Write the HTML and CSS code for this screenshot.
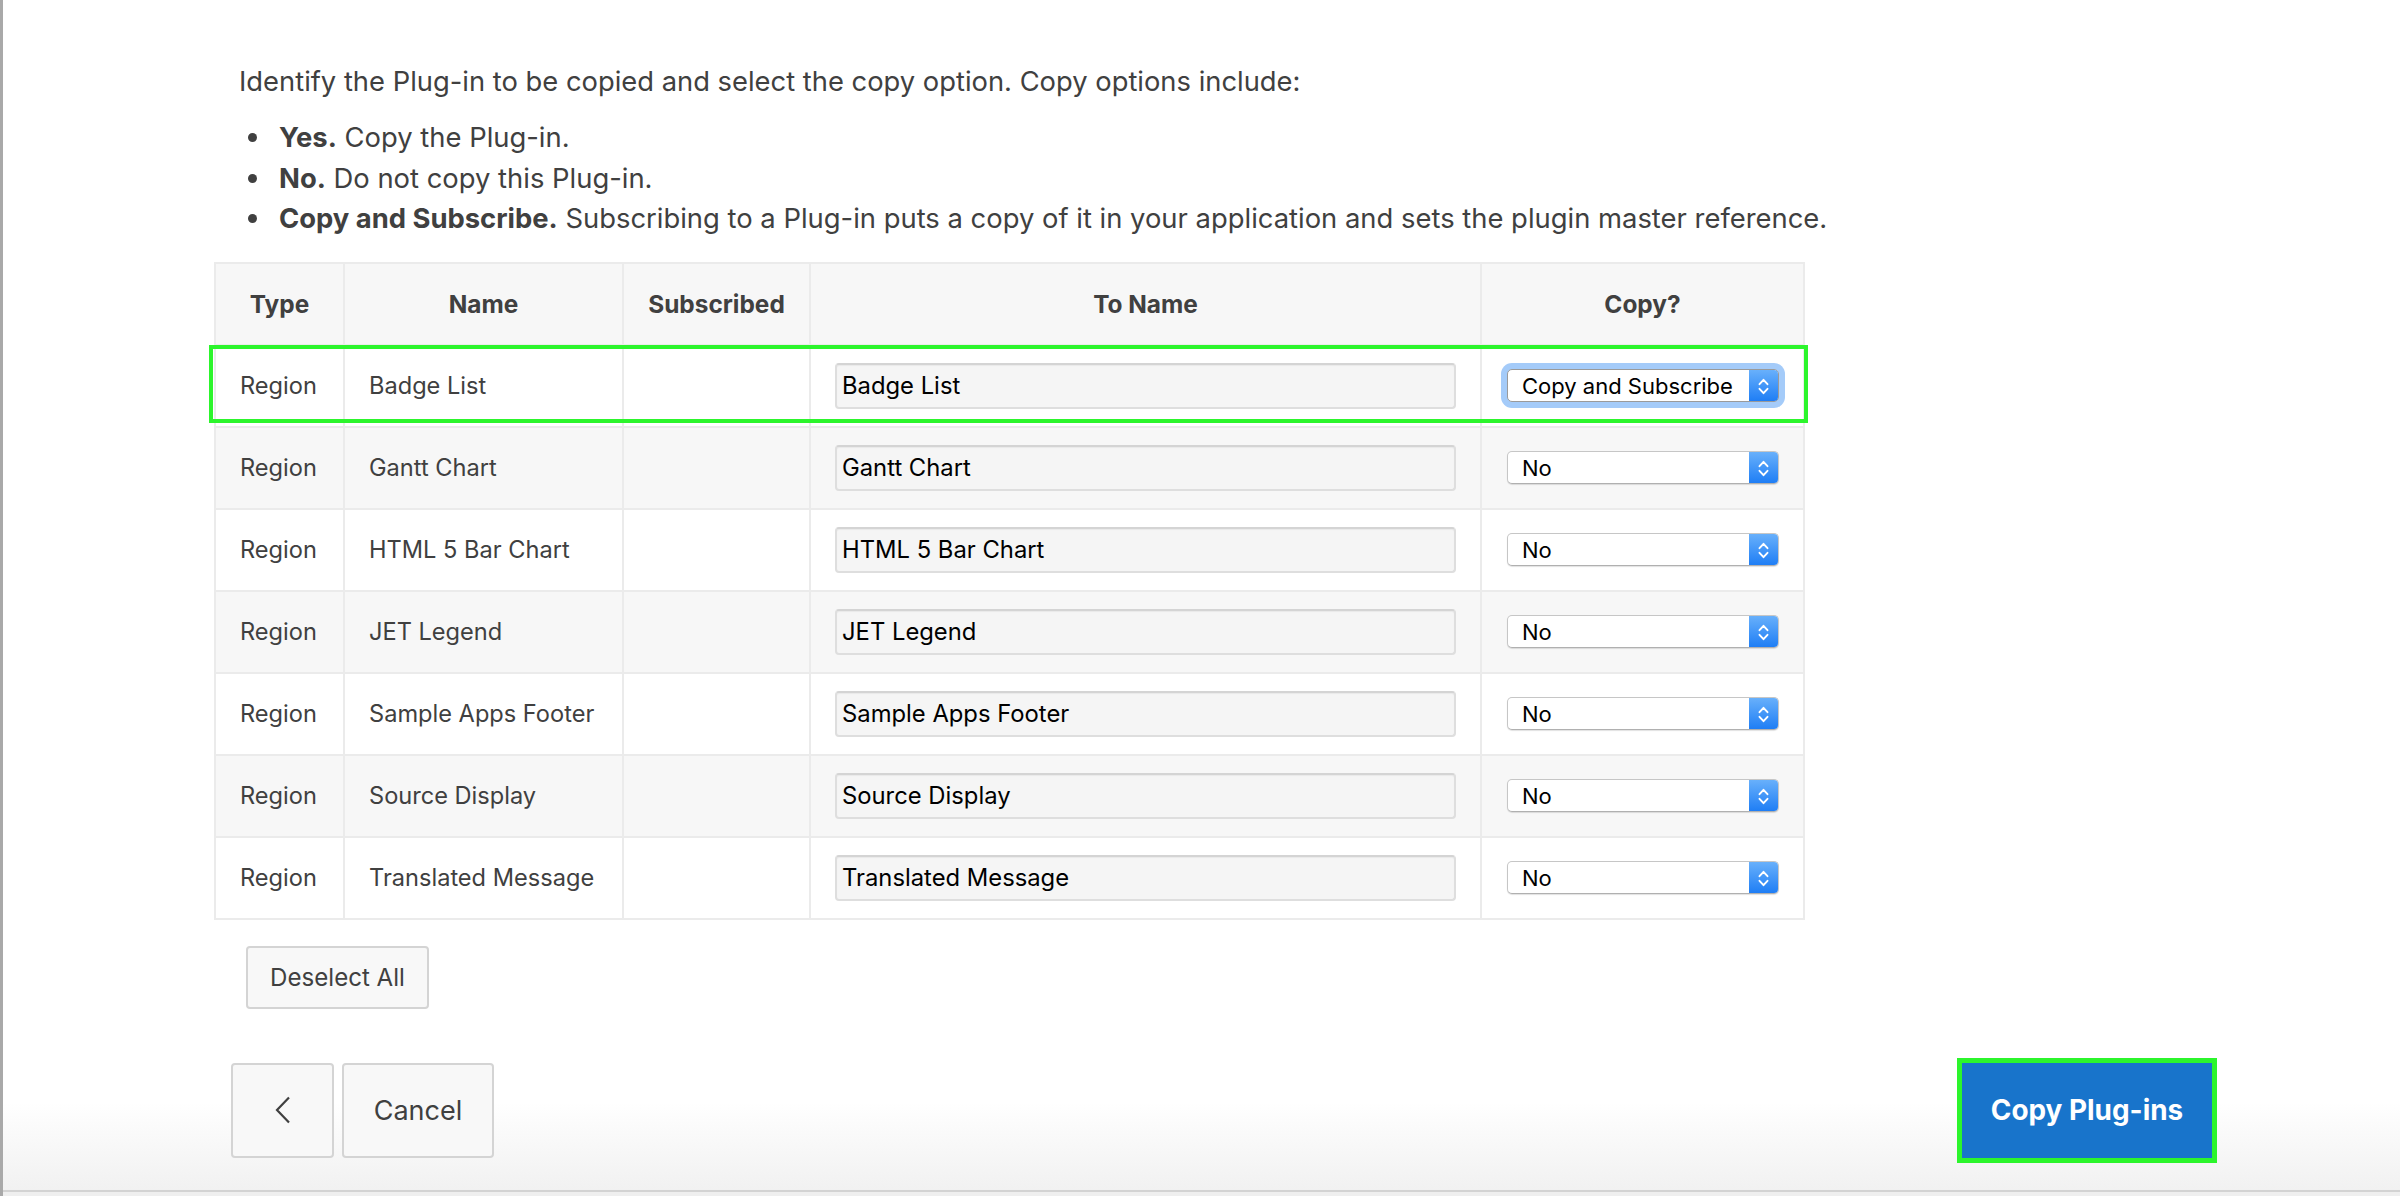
FILE: index.html
```html
<!DOCTYPE html>
<html lang="en">
<head>
<meta charset="utf-8">
<title>Copy Plug-ins</title>
<link rel="stylesheet" href="styles.css">
</head>
<body>
<div class="page">
  <main class="content">
    <p class="intro">Identify the Plug-in to be copied and select the copy option. Copy options include:</p>
    <ul class="options">
      <li><b>Yes.</b> Copy the Plug-in.</li>
      <li><b>No.</b> Do not copy this Plug-in.</li>
      <li><b>Copy and Subscribe.</b> Subscribing to a Plug-in puts a copy of it in your application and sets the plugin master reference.</li>
    </ul>
    <div class="table-wrap">
      <table class="grid">
        <colgroup>
          <col class="c-type"><col class="c-name"><col class="c-sub"><col class="c-to"><col class="c-copy">
        </colgroup>
        <thead>
          <tr><th>Type</th><th>Name</th><th>Subscribed</th><th>To Name</th><th>Copy?</th></tr>
        </thead>
        <tbody>
          <tr>
            <td>Region</td><td>Badge List</td><td></td>
            <td><input class="text" type="text" value="Badge List"></td>
            <td><div class="select focused"><span class="sel-val">Copy and Subscribe</span><span class="sel-arrow"><svg viewBox="0 0 29 33" width="29" height="33"><path d="M10.5 14.2 L14.5 9.8 L18.5 14.2 M10.5 18.8 L14.5 23.2 L18.5 18.8" fill="none" stroke="#fff" stroke-width="1.9" stroke-linecap="round" stroke-linejoin="round"/></svg></span></div></td>
          </tr>
          <tr>
            <td>Region</td><td>Gantt Chart</td><td></td>
            <td><input class="text" type="text" value="Gantt Chart"></td>
            <td><div class="select"><span class="sel-val">No</span><span class="sel-arrow"><svg viewBox="0 0 29 33" width="29" height="33"><path d="M10.5 14.2 L14.5 9.8 L18.5 14.2 M10.5 18.8 L14.5 23.2 L18.5 18.8" fill="none" stroke="#fff" stroke-width="1.9" stroke-linecap="round" stroke-linejoin="round"/></svg></span></div></td>
          </tr>
          <tr>
            <td>Region</td><td>HTML 5 Bar Chart</td><td></td>
            <td><input class="text" type="text" value="HTML 5 Bar Chart"></td>
            <td><div class="select"><span class="sel-val">No</span><span class="sel-arrow"><svg viewBox="0 0 29 33" width="29" height="33"><path d="M10.5 14.2 L14.5 9.8 L18.5 14.2 M10.5 18.8 L14.5 23.2 L18.5 18.8" fill="none" stroke="#fff" stroke-width="1.9" stroke-linecap="round" stroke-linejoin="round"/></svg></span></div></td>
          </tr>
          <tr>
            <td>Region</td><td>JET Legend</td><td></td>
            <td><input class="text" type="text" value="JET Legend"></td>
            <td><div class="select"><span class="sel-val">No</span><span class="sel-arrow"><svg viewBox="0 0 29 33" width="29" height="33"><path d="M10.5 14.2 L14.5 9.8 L18.5 14.2 M10.5 18.8 L14.5 23.2 L18.5 18.8" fill="none" stroke="#fff" stroke-width="1.9" stroke-linecap="round" stroke-linejoin="round"/></svg></span></div></td>
          </tr>
          <tr>
            <td>Region</td><td>Sample Apps Footer</td><td></td>
            <td><input class="text" type="text" value="Sample Apps Footer"></td>
            <td><div class="select"><span class="sel-val">No</span><span class="sel-arrow"><svg viewBox="0 0 29 33" width="29" height="33"><path d="M10.5 14.2 L14.5 9.8 L18.5 14.2 M10.5 18.8 L14.5 23.2 L18.5 18.8" fill="none" stroke="#fff" stroke-width="1.9" stroke-linecap="round" stroke-linejoin="round"/></svg></span></div></td>
          </tr>
          <tr>
            <td>Region</td><td>Source Display</td><td></td>
            <td><input class="text" type="text" value="Source Display"></td>
            <td><div class="select"><span class="sel-val">No</span><span class="sel-arrow"><svg viewBox="0 0 29 33" width="29" height="33"><path d="M10.5 14.2 L14.5 9.8 L18.5 14.2 M10.5 18.8 L14.5 23.2 L18.5 18.8" fill="none" stroke="#fff" stroke-width="1.9" stroke-linecap="round" stroke-linejoin="round"/></svg></span></div></td>
          </tr>
          <tr>
            <td>Region</td><td>Translated Message</td><td></td>
            <td><input class="text" type="text" value="Translated Message"></td>
            <td><div class="select"><span class="sel-val">No</span><span class="sel-arrow"><svg viewBox="0 0 29 33" width="29" height="33"><path d="M10.5 14.2 L14.5 9.8 L18.5 14.2 M10.5 18.8 L14.5 23.2 L18.5 18.8" fill="none" stroke="#fff" stroke-width="1.9" stroke-linecap="round" stroke-linejoin="round"/></svg></span></div></td>
          </tr>
        </tbody>
      </table>
      <div class="highlight"></div>
    </div>
    <button class="btn deselect" type="button">Deselect All</button>
  </main>
  <footer class="actions">
    <div class="actions-left">
      <button class="btn back" type="button" aria-label="Previous"><svg viewBox="0 0 16 28" width="16" height="28"><path d="M14 1.5 L2 14 L14 26.5" fill="none" stroke="#404040" stroke-width="2.2" stroke-linejoin="miter"/></svg></button>
      <button class="btn cancel" type="button">Cancel</button>
    </div>
    <button class="btn primary" type="button">Copy Plug-ins</button>
  </footer>
</div>
</body>
</html>
```

FILE: styles.css
```css
* { box-sizing: border-box; }

html, body {
  margin: 0;
  padding: 0;
}

body {
  width: 2400px;
  height: 1196px;
  overflow: hidden;
  background: #efefef;
  border-left: 3px solid #a9a9a9;
  font-family: Inter, "Liberation Sans", sans-serif;
  color: #404040;
}

.page {
  height: 1192px;
  display: flex;
  flex-direction: column;
  background: #ffffff;
  border-bottom: 2px solid #d3d3d3;
}

.content {
  flex: 1;
  padding: 62px 0 0 211px;
}

.intro {
  margin: 0 0 15px;
  padding-left: 25px;
  font-size: 27.35px;
  line-height: 40px;
}

.options {
  margin: 0;
  padding-left: 65px;
  list-style: none;
  font-size: 27.4px;
  line-height: 40.5px;
}

.options li::before {
  content: "";
  display: inline-block;
  width: 9px;
  height: 9px;
  margin: 0 22px 0 -31px;
  border-radius: 50%;
  background: #404040;
  vertical-align: middle;
  position: relative;
  top: -2px;
}

.options b { font-weight: 700; }

.table-wrap {
  position: relative;
  width: 1589px;
  margin-top: 23px;
}

.grid {
  width: 1589px;
  border-collapse: collapse;
  table-layout: fixed;
  border: 2px solid #ebebeb;
}

.c-type { width: 129px; }
.c-name { width: 279px; }
.c-sub  { width: 187px; }
.c-to   { width: 671px; }
.c-copy { width: 323px; }

.grid th,
.grid td {
  border: 2px solid #ebebeb;
  height: 82px;
  padding: 0 24px;
  font-size: 23.6px;
  vertical-align: middle;
  white-space: nowrap;
}

.grid th {
  background: #f7f7f7;
  font-size: 24.4px;
  font-weight: 700;
  text-align: center;
  color: #404040;
}

.grid td {
  text-align: left;
  background: #ffffff;
}

.grid tbody tr:nth-child(even) td {
  background: #f7f7f7;
}

.text {
  display: block;
  width: 100%;
  height: 46px;
  padding: 0 5px;
  border: 2px solid #dedede;
  border-top-color: #d4d4d4;
  border-radius: 4px;
  background: #f5f5f5;
  box-shadow: inset 0 1px 1px rgba(0, 0, 0, 0.05);
  font-family: Inter, "Liberation Sans", sans-serif;
  font-size: 23.8px;
  color: #000000;
  outline: none;
}

.select {
  display: flex;
  align-items: center;
  width: 272px;
  height: 33px;
  margin-left: 1px;
  border: 1px solid #c6c6c6;
  border-bottom-color: #b0b0b0;
  border-radius: 5px;
  background: #ffffff;
  box-shadow: 0 1px 1px rgba(0, 0, 0, 0.12);
  overflow: hidden;
  font-size: 22px;
  color: #000000;
}

.select.focused {
  border-color: #9a9a9a;
  box-shadow: 0 0 0 6px #a4cbf9;
}

.sel-val {
  flex: 1;
  padding-left: 14px;
  white-space: nowrap;
}

.sel-arrow {
  display: flex;
  width: 29px;
  height: 100%;
  background: linear-gradient(to bottom, #68b0fb, #1f7ef5);
}

.highlight {
  position: absolute;
  left: -5px;
  top: 83px;
  width: 1599px;
  height: 78px;
  border: 4px solid #2cf52c;
  pointer-events: none;
}

.btn {
  font-family: Inter, "Liberation Sans", sans-serif;
  color: #404040;
  background: #f8f8f8;
  border: 2px solid #d4d4d4;
  border-radius: 4px;
  padding: 0;
  cursor: pointer;
}

.deselect {
  display: block;
  width: 183px;
  height: 63px;
  margin: 26px 0 0 32px;
  font-size: 24.1px;
}

.actions {
  height: 160px;
  padding: 0 183px 0 228px;
  display: flex;
  align-items: center;
  justify-content: space-between;
  background: linear-gradient(to bottom, #ffffff 0%, #ffffff 45%, #f1f1f1 100%);
}

.actions-left {
  display: flex;
  gap: 8px;
}

.back {
  width: 103px;
  height: 95px;
  display: flex;
  align-items: center;
  justify-content: center;
}

.cancel {
  width: 152px;
  height: 95px;
  font-size: 27px;
}

.primary {
  width: 260px;
  height: 105px;
  background: #1874cb;
  border: 5px solid #2cf52c;
  border-radius: 0;
  color: #ffffff;
  font-size: 27.9px;
  font-weight: 700;
}
```
